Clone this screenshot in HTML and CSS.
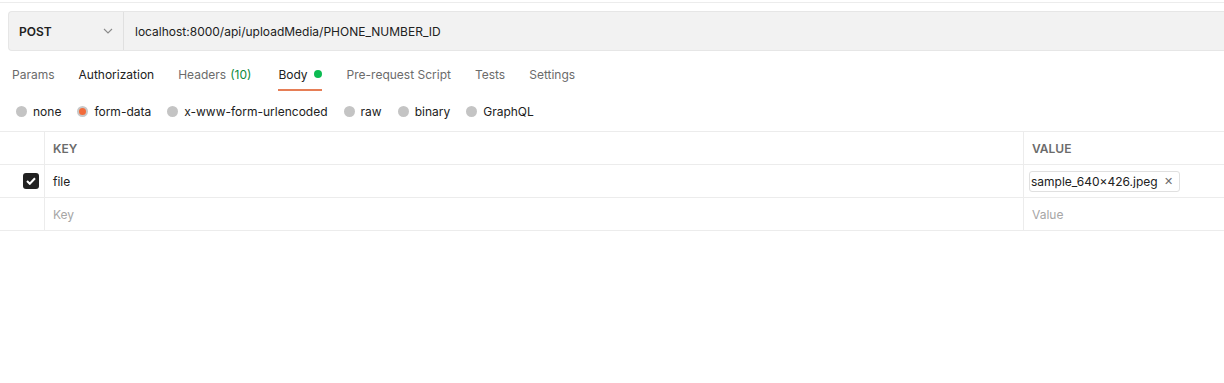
FILE: index.html
```html
<!DOCTYPE html>
<html lang="en">
<head>
    <meta charset="UTF-8">
    <title>Request - uploadMedia</title>
    <link rel="stylesheet" href="styles.css">
</head>
<body>
    <div class="top-line"></div>

    <div class="url-bar">
        <div class="method">
            <span>POST</span>
            <svg class="chevron" width="10" height="6" viewBox="0 0 10 6"><path d="M1 1l4 4 4-4" fill="none" stroke="#8a8a8a" stroke-width="1.1"/></svg>
        </div>
        <div class="url">localhost:8000/api/uploadMedia/PHONE_NUMBER_ID</div>
    </div>

    <div class="tabs">
        <div class="tab">Params</div>
        <div class="tab dark">Authorization</div>
        <div class="tab headers">Headers <span class="count">(10)</span></div>
        <div class="tab active">Body <span class="dot"></span></div>
        <div class="tab">Pre-request Script</div>
        <div class="tab">Tests</div>
        <div class="tab">Settings</div>
    </div>

    <div class="body-types">
        <label class="radio"><span class="circle"></span>none</label>
        <label class="radio"><span class="circle checked"></span>form-data</label>
        <label class="radio"><span class="circle"></span>x-www-form-urlencoded</label>
        <label class="radio"><span class="circle"></span>raw</label>
        <label class="radio"><span class="circle"></span>binary</label>
        <label class="radio"><span class="circle"></span>GraphQL</label>
    </div>

    <div class="table">
        <div class="row head">
            <div class="cell check"></div>
            <div class="cell key">KEY</div>
            <div class="cell value">VALUE</div>
        </div>
        <div class="row">
            <div class="cell check">
                <span class="checkbox">
                    <svg width="10" height="8" viewBox="0 0 10 8"><path d="M1 4l2.8 2.8L9 1.2" fill="none" stroke="#fff" stroke-width="2"/></svg>
                </span>
            </div>
            <div class="cell key">file</div>
            <div class="cell value">
                <span class="file-chip">sample_640×426.jpeg <span class="remove">✕</span></span>
            </div>
        </div>
        <div class="row">
            <div class="cell check"></div>
            <div class="cell key placeholder">Key</div>
            <div class="cell value placeholder">Value</div>
        </div>
    </div>
</body>
</html>
```

FILE: styles.css
```css
* {
    margin: 0;
    padding: 0;
    box-sizing: border-box;
}

body {
    font-family: Inter, 'Noto Sans', sans-serif;
    font-size: 12px;
    color: #212121;
    background: #fff;
    width: 1224px;
    height: 383px;
    overflow: hidden;
}

.top-line {
    height: 3px;
    border-bottom: 1px solid #ececec;
}

.url-bar {
    display: flex;
    height: 40px;
    margin: 8px 0 0 8px;
    background: #f2f2f2;
    border: 1px solid #e6e6e6;
    border-right: none;
    border-radius: 4px 0 0 4px;
}

.method {
    width: 115px;
    display: flex;
    align-items: center;
    justify-content: space-between;
    padding: 0 10px 0 10px;
    border-right: 1px solid #e0e0e0;
    font-weight: 600;
    font-size: 12px;
    color: #212121;
}

.url {
    display: flex;
    align-items: center;
    padding-left: 11px;
    color: #212121;
}

.tabs {
    display: flex;
    gap: 24px;
    padding: 0 0 0 12px;
    height: 40px;
    align-items: stretch;
}

.tab {
    display: flex;
    align-items: center;
    color: #6b6b6b;
    padding-top: 8px;
    border-bottom: 2px solid transparent;
}

.tab.headers {
    margin-right: 3px;
}

.tab.dark,
.tab.active {
    color: #212121;
}

.tab.active {
    border-bottom-color: #e67e56;
    margin-right: 1px;
}

.count {
    color: #0c8a3c;
    margin-left: 4px;
}

.dot {
    width: 8px;
    height: 8px;
    border-radius: 50%;
    background: #0cbb52;
    margin-left: 6px;
}

.body-types {
    display: flex;
    gap: 16px;
    padding: 0 0 0 16px;
    height: 40px;
    align-items: center;
}

.radio {
    display: flex;
    align-items: center;
    gap: 6px;
    color: #212121;
}

.circle {
    width: 11px;
    height: 11px;
    border-radius: 50%;
    background: #c4c4c4;
}

.circle.checked {
    background: #f26b3a;
    border: 2px solid #c8c8c8;
}

.table {
    border-top: 1px solid #ececec;
}

.row {
    display: flex;
    height: 33px;
    border-bottom: 1px solid #ececec;
}

.cell {
    display: flex;
    align-items: center;
}

.check {
    width: 45px;
    border-right: 1px solid #ececec;
    justify-content: flex-end;
    padding-right: 5px;
}

.key {
    width: 979px;
    padding-left: 8px;
    border-right: 1px solid #ececec;
}

.value {
    flex: 1;
    padding-left: 8px;
}

.head .cell {
    font-weight: 600;
    color: #6b6b6b;
}

.placeholder {
    color: #a6a6a6;
}

.checkbox {
    width: 16px;
    height: 16px;
    border-radius: 3px;
    background: #212121;
    display: flex;
    align-items: center;
    justify-content: center;
}

.value .file-chip {
    margin-left: -3px;
    display: flex;
    align-items: center;
    gap: 6px;
    height: 21px;
    padding: 0 6px 0 1px;
    border: 1px solid #e0e0e0;
    border-radius: 3px;
    color: #212121;
}

.remove {
    font-size: 11px;
    color: #6b6b6b;
}
```
